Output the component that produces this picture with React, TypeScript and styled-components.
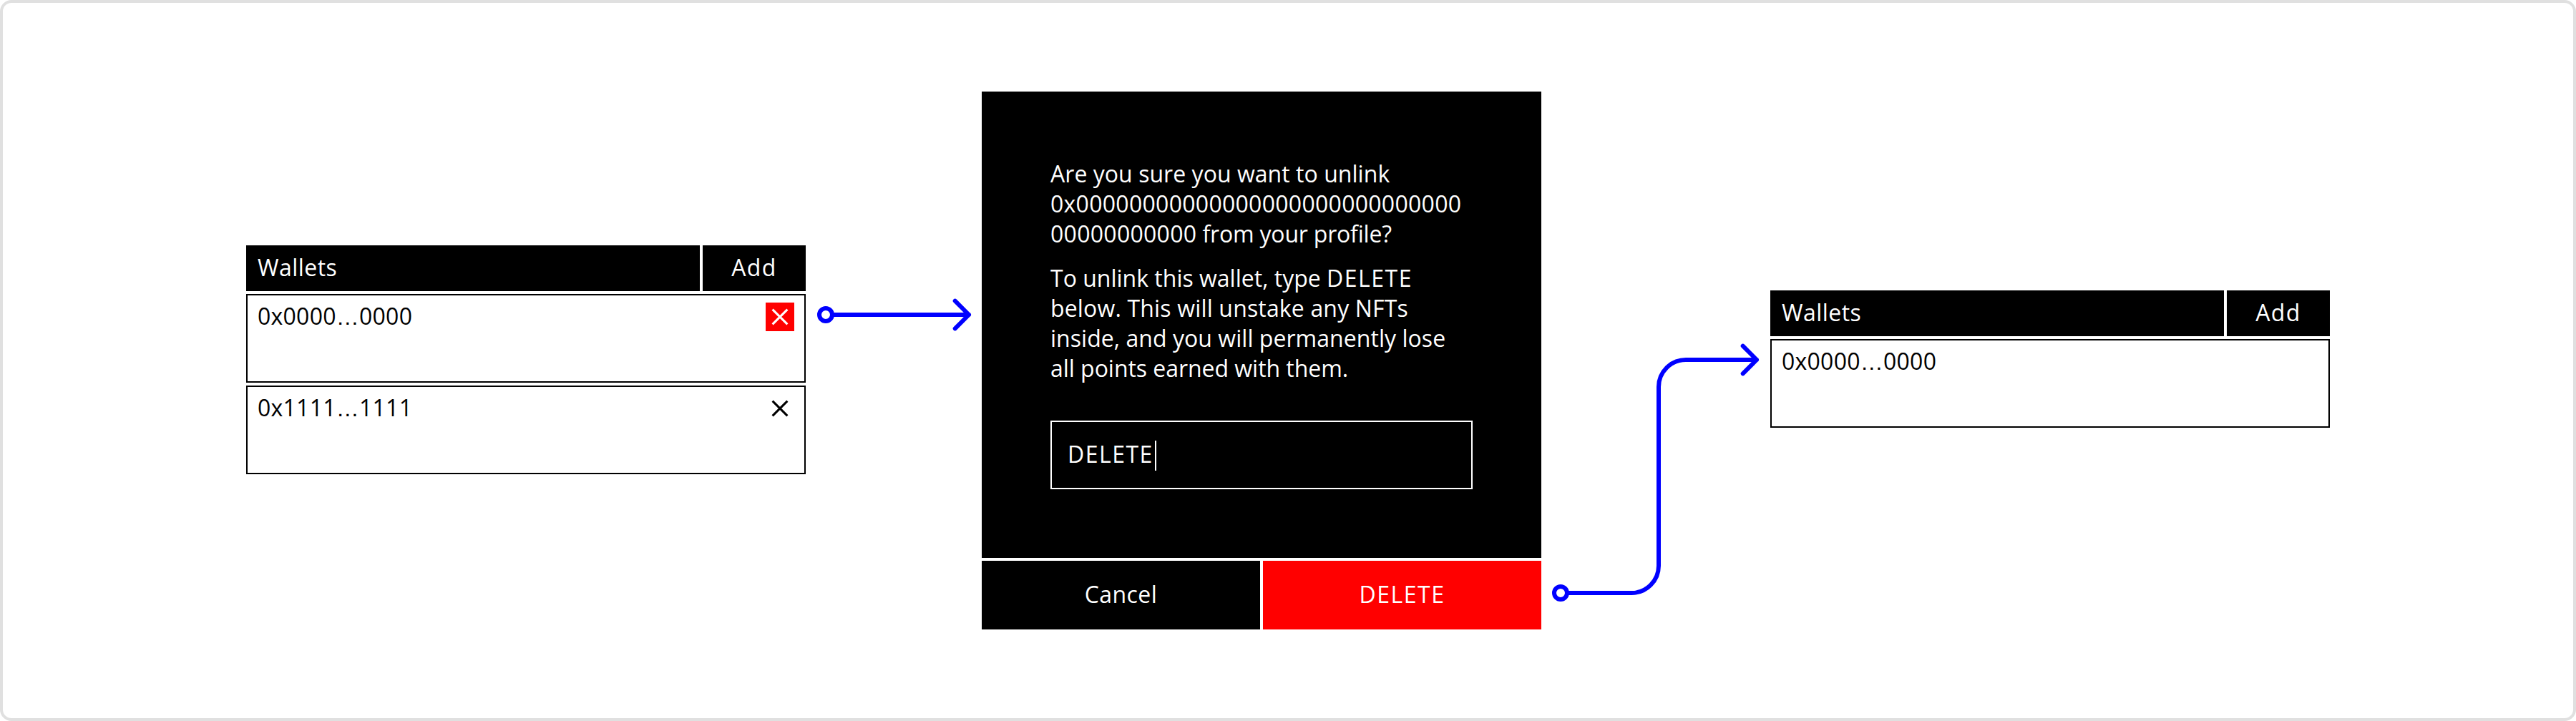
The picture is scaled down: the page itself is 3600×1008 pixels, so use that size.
import React from 'react';
import styled, { createGlobalStyle } from 'styled-components';

const GlobalStyle = createGlobalStyle`
  * { box-sizing: border-box; }
  body {
    margin: 0;
    background: #fff;
    color: #000;
    font-family: "Open Sans", "Noto Sans", sans-serif;
    font-size: 32px;
    line-height: 42px;
  }
`;

const Board = styled.main`
  display: flex;
  justify-content: center;
  align-items: flex-start;
  width: 3600px;
  height: 1008px;
  border: 4px solid #e0e0e0;
  border-radius: 16px;
  overflow: hidden;
`;

const Text = styled.span<{ $tracking?: number }>`
  white-space: pre;
  letter-spacing: ${(p) => p.$tracking ?? 0}px;
`;

const Ellipsis = styled.span`
  font-family: "Liberation Sans", Arial, sans-serif;
`;

const WalletPanel = styled.section<{ $top: number }>`
  display: flex;
  flex-direction: column;
  gap: 4px;
  flex: none;
  width: 782px;
  margin-top: ${(p) => p.$top}px;
`;

const PanelHeader = styled.header`
  display: grid;
  grid-template-columns: 1fr 144px;
  gap: 4px;
  height: 64px;
`;

const PanelTitle = styled.h2`
  margin: 0;
  padding: 10px 16px;
  background: #000;
  color: #fff;
  font: inherit;
`;

const AddButton = styled.button`
  margin: 0;
  padding: 10px 0 12px;
  border: 0;
  background: #000;
  color: #fff;
  font: inherit;
  text-align: center;
`;

const WalletRow = styled.div`
  display: flex;
  justify-content: space-between;
  align-items: flex-start;
  height: 124px;
  padding: 8px 14px;
  border: 2px solid #000;
`;

const RemoveButton = styled.button<{ $active?: boolean }>`
  display: flex;
  width: 40px;
  height: 40px;
  margin: 2px 0 0;
  padding: 0;
  border: 0;
  background: ${(p) => (p.$active ? '#f00' : 'transparent')};
  color: ${(p) => (p.$active ? '#fff' : '#000')};
`;

const Dialog = styled.section`
  display: flex;
  flex-direction: column;
  gap: 4px;
  flex: none;
  width: 782px;
  margin-top: 124px;
  color: #fff;
`;

const DialogBody = styled.div`
  display: flex;
  flex-direction: column;
  height: 652px;
  padding: 94px 96px 96px;
  background: #000;
`;

const Paragraph = styled.p`
  display: flex;
  flex-direction: column;
  margin: 0 0 20px;
`;

const Line = styled(Text)`
  display: block;
  height: 42px;
`;

const ConfirmField = styled.div`
  display: flex;
  align-items: flex-start;
  height: 96px;
  margin-top: 32px;
  padding: 24px 22px;
  border: 2px solid #fff;
`;

const Caret = styled.i`
  width: 2px;
  height: 42px;
  margin: 2px 0 0 2px;
  background: #fff;
`;

const DialogActions = styled.div`
  display: grid;
  grid-template-columns: 1fr 1fr;
  gap: 4px;
  height: 96px;
`;

const ActionButton = styled.button<{ $danger?: boolean }>`
  margin: 0;
  padding: 26px 0 28px;
  border: 0;
  background: ${(p) => (p.$danger ? '#f00' : '#000')};
  color: #fff;
  font: inherit;
  text-align: center;
`;

const Connector = styled.svg`
  display: block;
  flex: none;
  height: 1000px;
  fill: none;
  stroke: #00f;
  stroke-width: 6;
  stroke-linecap: round;
  stroke-linejoin: round;
`;

function Cross() {
  return (
    <svg width="40" height="40" viewBox="0 0 40 40" fill="none" stroke="currentColor" strokeWidth="3">
      <path d="M9.6 9.6L30.4 30.4M30.4 9.6L9.6 30.4" />
    </svg>
  );
}

function Address({ start, end }: { start: string; end: string }) {
  return (
    <Text $tracking={0.25}>{start}<Ellipsis>…</Ellipsis>{end}</Text>
  );
}

function Wallets({ top, children }: { top: number; children: React.ReactNode }) {
  return (
    <WalletPanel $top={top}>
      <PanelHeader>
        <PanelTitle><Text $tracking={0.44}>Wallets</Text></PanelTitle>
        <AddButton><Text $tracking={1.4}>Add</Text></AddButton>
      </PanelHeader>
      {children}
    </WalletPanel>
  );
}

export default function App() {
  return (
    <>
      <GlobalStyle />
      <Board>
        <Wallets top={339}>
          <WalletRow>
            <Address start="0x0000" end="0000" />
            <RemoveButton $active aria-label="Remove"><Cross /></RemoveButton>
          </WalletRow>
          <WalletRow>
            <Address start="0x1111" end="1111" />
            <RemoveButton aria-label="Remove"><Cross /></RemoveButton>
          </WalletRow>
        </Wallets>

        <Connector width="246" viewBox="1126 4 246 1000">
          <circle cx="1154" cy="440" r="9" />
          <path d="M1163 440H1354M1334.7 420.7L1354 440L1334.7 459.3" />
        </Connector>

        <Dialog>
          <DialogBody>
            <Paragraph>
              <Line $tracking={0.04}>Are you sure you want to unlink</Line>
              <Line $tracking={0.28}>0x00000000000000000000000000000</Line>
              <Line $tracking={-0.2}><Text $tracking={0.28}>00000000000</Text> from your profile?</Line>
            </Paragraph>
            <Paragraph>
              <Line>To unlink this wallet, type <Text $tracking={1.5}>DELETE</Text></Line>
              <Line $tracking={0.16}>below. This will unstake any NFTs</Line>
              <Line $tracking={0.04}>inside, and you will permanently lose</Line>
              <Line $tracking={-0.04}>all points earned with them.</Line>
            </Paragraph>
            <ConfirmField>
              <Text $tracking={1.5}>DELETE</Text>
              <Caret />
            </ConfirmField>
          </DialogBody>
          <DialogActions>
            <ActionButton><Text $tracking={0.43}>Cancel</Text></ActionButton>
            <ActionButton $danger><Text $tracking={1.5}>DELETE</Text></ActionButton>
          </DialogActions>
        </Dialog>

        <Connector width="320" viewBox="2154 4 320 1000">
          <circle cx="2181" cy="829" r="9" />
          <path d="M2190 829H2280A38 38 0 0 0 2318 791V541A38 38 0 0 1 2356 503H2455M2435.7 483.7L2455 503L2435.7 522.3" />
        </Connector>

        <Wallets top={402}>
          <WalletRow>
            <Address start="0x0000" end="0000" />
          </WalletRow>
        </Wallets>
      </Board>
    </>
  );
}
